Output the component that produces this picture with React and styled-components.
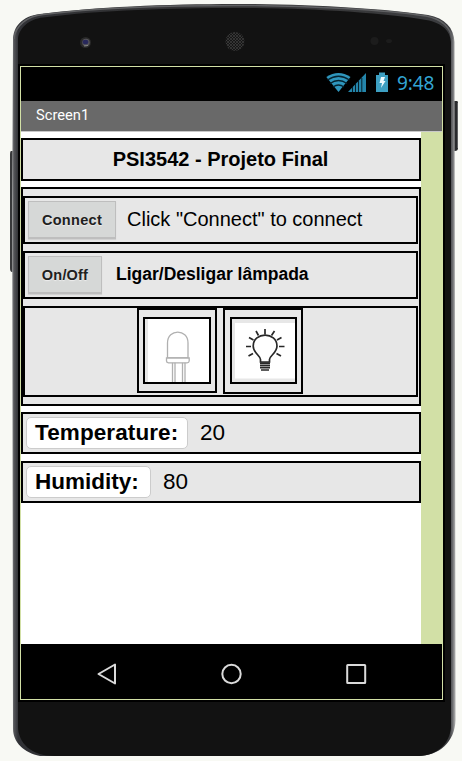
import React from "react";
import styled, { createGlobalStyle } from "styled-components";

const GlobalStyle = createGlobalStyle`
  *, *::before, *::after { box-sizing: border-box; }
  body { margin: 0; background: #f8f9f4; }
`;

const Page = styled.main`
  position: relative;
  width: 462px;
  height: 761px;
  padding: 64px 17px 0 18px;
  overflow: hidden;
  background: #f8f9f4;
  font-family: "Liberation Sans", Arial, sans-serif;
  color: #000;
`;

const Shell = styled.svg`
  position: absolute;
  inset: 0;
`;

const Bezel = styled.div`
  position: relative;
  width: 427px;
  height: 638px;
  padding: 2px;
  background: #000;
`;

const Screen = styled.div`
  display: flex;
  flex-direction: column;
  height: 634px;
  border: 1px solid #d2e0a6;
`;

const StatusBar = styled.div`
  display: flex;
  align-items: center;
  justify-content: flex-end;
  flex: 0 0 34px;
  padding: 0 7px 2px 0;
  color: #33a5d3;
`;

const Clock = styled.span`
  width: 38px;
  margin-left: 7px;
  font: 19px/32px "Noto Sans", sans-serif;
  letter-spacing: -0.1px;
  white-space: nowrap;
`;

const TitleBar = styled.header`
  flex: 0 0 31px;
  padding-left: 15px;
  border-bottom: 1px solid #c8c8c8;
  background: #696969;
  color: #fff;
  font: 14.7px/29px Roboto, sans-serif;
`;

const Body = styled.div`
  display: flex;
  flex: 1;
  background: #d2e0a6;
`;

const Form = styled.div`
  width: 400px;
  padding-top: 6px;
  background: #fff;
`;

const Panel = styled.section`
  display: flex;
  align-items: ${(p) => p.$align || "center"};
  justify-content: ${(p) => p.$justify || "flex-start"};
  height: ${(p) => p.$height}px;
  margin-bottom: ${(p) => p.$gap || 0}px;
  padding: ${(p) => (p.$justify === "center" ? "0 1px 0 0" : "0 0 0 3px")};
  border: 2px solid #000;
  background: #e7e7e7;
`;

const Group = styled.section`
  height: 219px;
  margin-bottom: 6px;
  padding: 7px 1px 0 0;
  border: 2px solid #000;
  background: #e7e7e7;
`;

const Label = styled.span`
  margin-left: ${(p) => p.$left || 0}px;
  padding-bottom: ${(p) => p.$lift || 0}px;
  font-size: ${(p) => p.$size}px;
  font-weight: ${(p) => (p.$bold ? 700 : 400)};
  line-height: 1.15;
  white-space: nowrap;
`;

const Button = styled.button`
  width: ${(p) => p.$width}px;
  height: 38px;
  padding: 0;
  border: 1px solid #bebebe;
  border-bottom-width: 2px;
  background: #d6d8d7;
  box-shadow: 0 1px 1px #d2d2d2;
  color: #202020;
  font: bold 14.5px "Liberation Sans", Arial, sans-serif;
  letter-spacing: ${(p) => p.$track || 0}px;
  text-shadow: 0 1px 1px #eee;
`;

const Field = styled.div`
  width: ${(p) => p.$width}px;
  height: 32px;
  padding-left: 8px;
  border: 1px solid #ccc;
  border-radius: 5px;
  background: #fff;
  font-size: 22.5px;
  font-weight: 700;
  line-height: 29px;
  letter-spacing: ${(p) => p.$track || 0}px;
  white-space: nowrap;
`;

const ImageFrame = styled.div`
  width: 80px;
  height: ${(p) => p.$height}px;
  margin-right: ${(p) => p.$gap || 0}px;
  padding: 7px 0 0 ${(p) => p.$inset}px;
  border: 2px solid #000;
`;

const Picture = styled.div`
  width: ${(p) => p.$width}px;
  height: 67px;
  border: 2px solid #000;
  svg { display: block; }
`;

const NavBar = styled.nav`
  flex: 0 0 55px;
  background: #000;
  svg { display: block; }
`;

function PhoneShell() {
  return (
    <Shell width="462" height="761" viewBox="0 0 462 761">
      <defs>
        <linearGradient id="rim" x1="12" x2="455" y1="0" y2="0" gradientUnits="userSpaceOnUse">
          <stop offset="0" stopColor="#a8a9aa" />
          <stop offset=".004" stopColor="#56575a" />
          <stop offset=".014" stopColor="#303135" />
          <stop offset=".5" stopColor="#343434" />
          <stop offset=".988" stopColor="#3b3c3f" />
          <stop offset=".995" stopColor="#707173" />
          <stop offset="1" stopColor="#aaa" />
        </linearGradient>
        <pattern id="mesh" width="3" height="3" patternUnits="userSpaceOnUse">
          <rect width="3" height="3" fill="#161616" />
          <path d="M0 0L3 3M3 0L0 3" stroke="#444" strokeWidth=".6" />
        </pattern>
      </defs>
      <path d="M14 151H11Q10 151 10 154V268Q10 272 12 272H14Z" fill="#37383a" />
      <path d="M453 101H457Q458 101 458 103V148Q458 151 455 151H453Z" fill="#292a2c" />
      <path d="M457.5 103V148" stroke="#77787a" strokeWidth=".7" />
      <path d="M13 40C13 27 22 16 40 14C95 7 165 4 236 4C310 4 387 9 428 15C445 18 454 28 454.500 42L455.500 720C455 742 439 756 418 756H40C24 753 13 742 13 729L12 200Z" fill="url(#rim)" />
      <path d="M14 39C15 26 27 16 43 14.500C95 8 165 5.500 236 5.500C310 5.500 387 10 426 16C442 19 451 28 452 39" fill="none" stroke="#606163" strokeWidth="1.500" />
      <path d="M18 39C19 28 29 19 43 17.500C101 10 174 8 236 8C310 8 385 13 426 20C443 23 450 31 451 42V728C449 744 438 755 419 756H55C31 756 18 743 18 726Z" fill="#121212" />
      <circle cx="85.500" cy="42.500" r="5.500" fill="#292929" />
      <circle cx="86" cy="42.500" r="3.800" fill="#555459" />
      <ellipse cx="85.500" cy="42" rx="2.800" ry="2.300" fill="#28285b" />
      <path d="M84 46L88 45.500" stroke="#888" strokeWidth="1" />
      <circle cx="235" cy="41.500" r="9.500" fill="url(#mesh)" />
      <circle cx="374.500" cy="41" r="4" fill="#1c1c1c" />
      <ellipse cx="389" cy="41" rx="3" ry="2" fill="#1c1c1c" />
    </Shell>
  );
}

function StatusIcons() {
  return (
    <svg width="64" height="22" viewBox="326 72 64 22">
      <path d="M326.300 77Q338.500 69 350.500 77L338.500 92Z" fill="#2f96bd" />
      <path d="M327.500 80Q338.500 72.500 349.500 80M330 83.500Q338.500 77.500 347 83.500M333 87Q338.500 83 344 87" fill="none" stroke="#052330" strokeWidth="1.300" />
      <path d="M348 92L366 73V92Z" fill="#2485aa" />
      <path d="M352.500 87V92M355.500 84V92M358.500 81V92M361.800 78V92" stroke="#06202b" strokeWidth="1" />
      <path d="M376 75H379V72.500H385V75H388V92H376Z" fill="#3d9fc2" />
      <path d="M381 77H385L383.500 81H385.500L381 88L382 83H379.500Z" fill="#eefaff" />
    </svg>
  );
}

function LedDrawing() {
  return (
    <svg width="64" height="63" viewBox="145 319 64 63">
      <path fill="#fff" d="M145 319H209V382H145Z" />
      <path fill="#e7e7e7" d="M145 319H148V382H145Z" />
      <g fill="#fff" stroke="#b0b0b0" strokeWidth="1.300">
        <path d="M172.500 362V384M175 362V384M182.500 362V384M185 362V384" />
        <path d="M167.500 358V343C167.500 328.500 188 328.500 188 343V358Z" />
        <path d="M166.500 358H189.200V361Q189 362.800 187 362.800H168.500Q166.500 362.500 166.500 361Z" />
      </g>
    </svg>
  );
}

function BulbDrawing() {
  return (
    <svg width="63" height="63" viewBox="232 319 63 63">
      <path fill="#e7e7e7" d="M232 319H295V382H232Z" />
      <path fill="#fff" d="M235 323H295V378.500H235Z" />
      <g fill="none" stroke="#282828" strokeWidth="1.700">
        <path d="M260.500 362V359.500C260 355 253.200 353 253.200 346C253.200 331.500 277 331.500 277 346C277 353 270 355 269.500 359.500V362Z" />
        <path d="M265 329V334.500M256 331L258.500 335.500M274.500 331L271.500 335.500M249 337.500L253.500 340M281.500 337.500L277 340M246 346.500H251M279 346.500H284.500M248.500 356L253 353.500M281 356L276.500 353.500" />
        <path d="M260 363.200H270M260 365.400H270M260 367.600H270M261 370H269" />
      </g>
    </svg>
  );
}

function NavigationIcons() {
  return (
    <svg width="421" height="55" viewBox="21 644 421 55">
      <g fill="none" stroke="#dadada" strokeWidth="2">
        <path d="M98.500 674L115 664.500V683.500Z" strokeLinejoin="round" />
        <circle cx="231.500" cy="674" r="9.200" />
        <rect x="347.200" y="665" width="18" height="18" rx=".5" />
      </g>
    </svg>
  );
}

export default function App() {
  return (
    <>
      <GlobalStyle />
      <Page>
        <PhoneShell />
        <Bezel>
          <Screen>
            <StatusBar><StatusIcons /><Clock>9:48</Clock></StatusBar>
            <TitleBar>Screen1</TitleBar>
            <Body>
              <Form>
                <Panel $height={43} $gap={6} $justify="center">
                  <Label $bold $size={20} $lift={1}>PSI3542 - Projeto Final</Label>
                </Panel>
                <Group>
                  <Panel $height={48} $gap={7}>
                    <Button $width={88} $track={0.3}>Connect</Button>
                    <Label $size={20} $left={11} $lift={2}>Click "Connect" to connect</Label>
                  </Panel>
                  <Panel $height={48} $gap={7}>
                    <Button $width={74} $track={0.2}>On/Off</Button>
                    <Label $bold $size={17.5} $left={14} $lift={2}>Ligar/Desligar lâmpada</Label>
                  </Panel>
                  <Panel $height={91} $align="flex-start" $justify="center">
                    <ImageFrame $height={85} $gap={6} $inset={4}>
                      <Picture $width={68}><LedDrawing /></Picture>
                    </ImageFrame>
                    <ImageFrame $height={86} $inset={5}>
                      <Picture $width={67}><BulbDrawing /></Picture>
                    </ImageFrame>
                  </Panel>
                </Group>
                <Panel $height={42} $gap={7}>
                  <Field $width={162} $track={0.1}>Temperature:</Field>
                  <Label $size={22.5} $left={12}>20</Label>
                </Panel>
                <Panel $height={42}>
                  <Field $width={125}>Humidity:</Field>
                  <Label $size={22.5} $left={12}>80</Label>
                </Panel>
              </Form>
            </Body>
            <NavBar><NavigationIcons /></NavBar>
          </Screen>
        </Bezel>
      </Page>
    </>
  );
}
